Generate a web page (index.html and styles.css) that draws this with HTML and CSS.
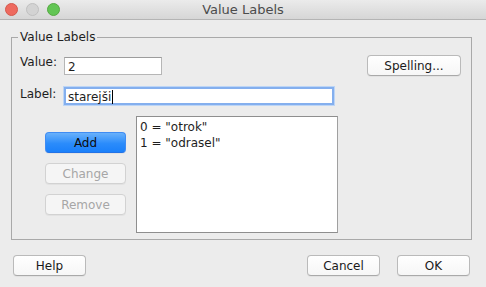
FILE: index.html
```html
<!DOCTYPE html>
<html lang="sl">
<head>
  <meta charset="UTF-8">
  <title>Value Labels</title>
  <link rel="stylesheet" href="styles.css">
</head>
<body>

  <div class="window">
    <div class="titlebar">
      <div class="lights">
        <span class="light red"></span>
        <span class="light gray"></span>
        <span class="light green"></span>
      </div>
      <div class="title">Value Labels</div>
    </div>

    <fieldset class="group">
      <legend>Value Labels</legend>

      <div class="row row-value">
        <label class="field-label">Value:</label>
        <div class="text-field value-field">2</div>
        <button class="btn spelling">Spelling...</button>
      </div>

      <div class="row row-label">
        <label class="field-label">Label:</label>
        <div class="text-field label-field">starejši<span class="caret"></span></div>
      </div>

      <div class="lower">
        <div class="side-buttons">
          <button class="btn btn-default">Add</button>
          <button class="btn" disabled>Change</button>
          <button class="btn" disabled>Remove</button>
        </div>
        <div class="list">
          <div class="list-item">0 = "otrok"</div>
          <div class="list-item">1 = "odrasel"</div>
        </div>
      </div>
    </fieldset>

    <div class="footer">
      <button class="btn footer-btn">Help</button>
      <div class="spacer"></div>
      <button class="btn footer-btn">Cancel</button>
      <button class="btn footer-btn">OK</button>
    </div>
  </div>

</body>
</html>
```

FILE: styles.css
```css
body {
  margin: 0;
  font-family: 'DejaVu Sans', sans-serif;
  font-size: 12px;
  color: #1e1e1e;
  background-color: #ececec;
}

.window {
  width: 486px;
  height: 287px;
  background-color: #ececec;
  overflow: hidden;
}

/* title bar */
.titlebar {
  height: 19px;
  border-bottom: 1px solid #b4b4b4;
  background: linear-gradient(#ebebeb, #d6d6d6);
  display: flex;
  align-items: center;
  position: relative;
}

.lights {
  display: flex;
  gap: 8px;
  margin-left: 5px;
}

.light {
  width: 11px;
  height: 11px;
  border-radius: 50%;
  border: 1px solid transparent;
}

.red { background: #ee6a5f; border-color: #d4594d; }
.gray { background: #d3d3d3; border-color: #c0c0c0; }
.green { background: #62c554; border-color: #55a942; }

.title {
  position: absolute;
  left: 0;
  right: 0;
  text-align: center;
  font-size: 13px;
  color: #4b4b4b;
}

/* group box */
.group {
  margin: 9px 14px 0 11px;
  padding: 0 10px 6px 8px;
  border: 1px solid #a9a9a9;
}

.group legend {
  margin-left: -2px;
  padding: 0 2px;
  line-height: 16px;
  font-size: 12px;
  color: #1e1e1e;
}

.row {
  display: flex;
  align-items: flex-start;
}

.row-value {
  margin-top: 10px;
  height: 21px;
}

.row-label {
  margin-top: 11px;
  height: 18px;
}

.field-label {
  width: 44px;
  line-height: 15px;
  margin-top: 0;
}

.text-field {
  box-sizing: border-box;
  background: #fff;
  border: 1px solid #b6b6b6;
  border-top-color: #9c9c9c;
  height: 18px;
  line-height: 16px;
  padding-left: 3px;
  font-size: 12px;
}

.value-field {
  width: 98px;
  margin-top: 2px;
  padding-top: 1px;
}

.label-field {
  width: 270px;
  border: 2px solid #84afee;
  box-shadow: 0 0 0 1px #bcd5f6;
  line-height: 14px;
  padding-left: 2px;
  padding-top: 1px;
}

.caret {
  display: inline-block;
  width: 1px;
  height: 14px;
  background: #000;
  vertical-align: top;
  margin-left: 1px;
}

/* buttons */
.btn {
  font-family: 'DejaVu Sans', sans-serif;
  font-size: 12px;
  color: #1a1a1a;
  height: 21px;
  padding: 0;
  border: 1px solid #bababa;
  border-bottom-color: #a9a9a9;
  border-radius: 4px;
  background: linear-gradient(#ffffff, #f6f6f6);
  box-shadow: 0 1px 0 rgba(0,0,0,0.04);
}

.btn:disabled {
  color: #a6a6a6;
  border-color: #d2d2d2;
  background: #f5f5f5;
}

.btn-default {
  border-color: #3f8cf3;
  border-bottom-color: #2272e6;
  background: linear-gradient(#69b1fb, #2b8cfb 55%, #1a80fa);
  color: #0c0c0c;
}

.spelling {
  width: 94px;
  margin-left: auto;
}

/* lower part */
.lower {
  display: flex;
  margin-top: 11px;
}

.side-buttons {
  display: flex;
  flex-direction: column;
  gap: 10px;
  width: 81px;
  margin-left: 25px;
  padding-top: 16px;
}

.list {
  box-sizing: border-box;
  width: 202px;
  height: 117px;
  margin-left: 10px;
  background: #fff;
  border: 1px solid #8e8e8e;
  border-right-color: #a0a0a0;
  padding: 2px 0 0 3px;
}

.list-item {
  line-height: 16px;
}

/* footer */
.footer {
  display: flex;
  margin: 15px 16px 0 13px;
  gap: 17px;
}

.spacer {
  flex: 1;
}

.footer-btn {
  width: 73px;
}
```
